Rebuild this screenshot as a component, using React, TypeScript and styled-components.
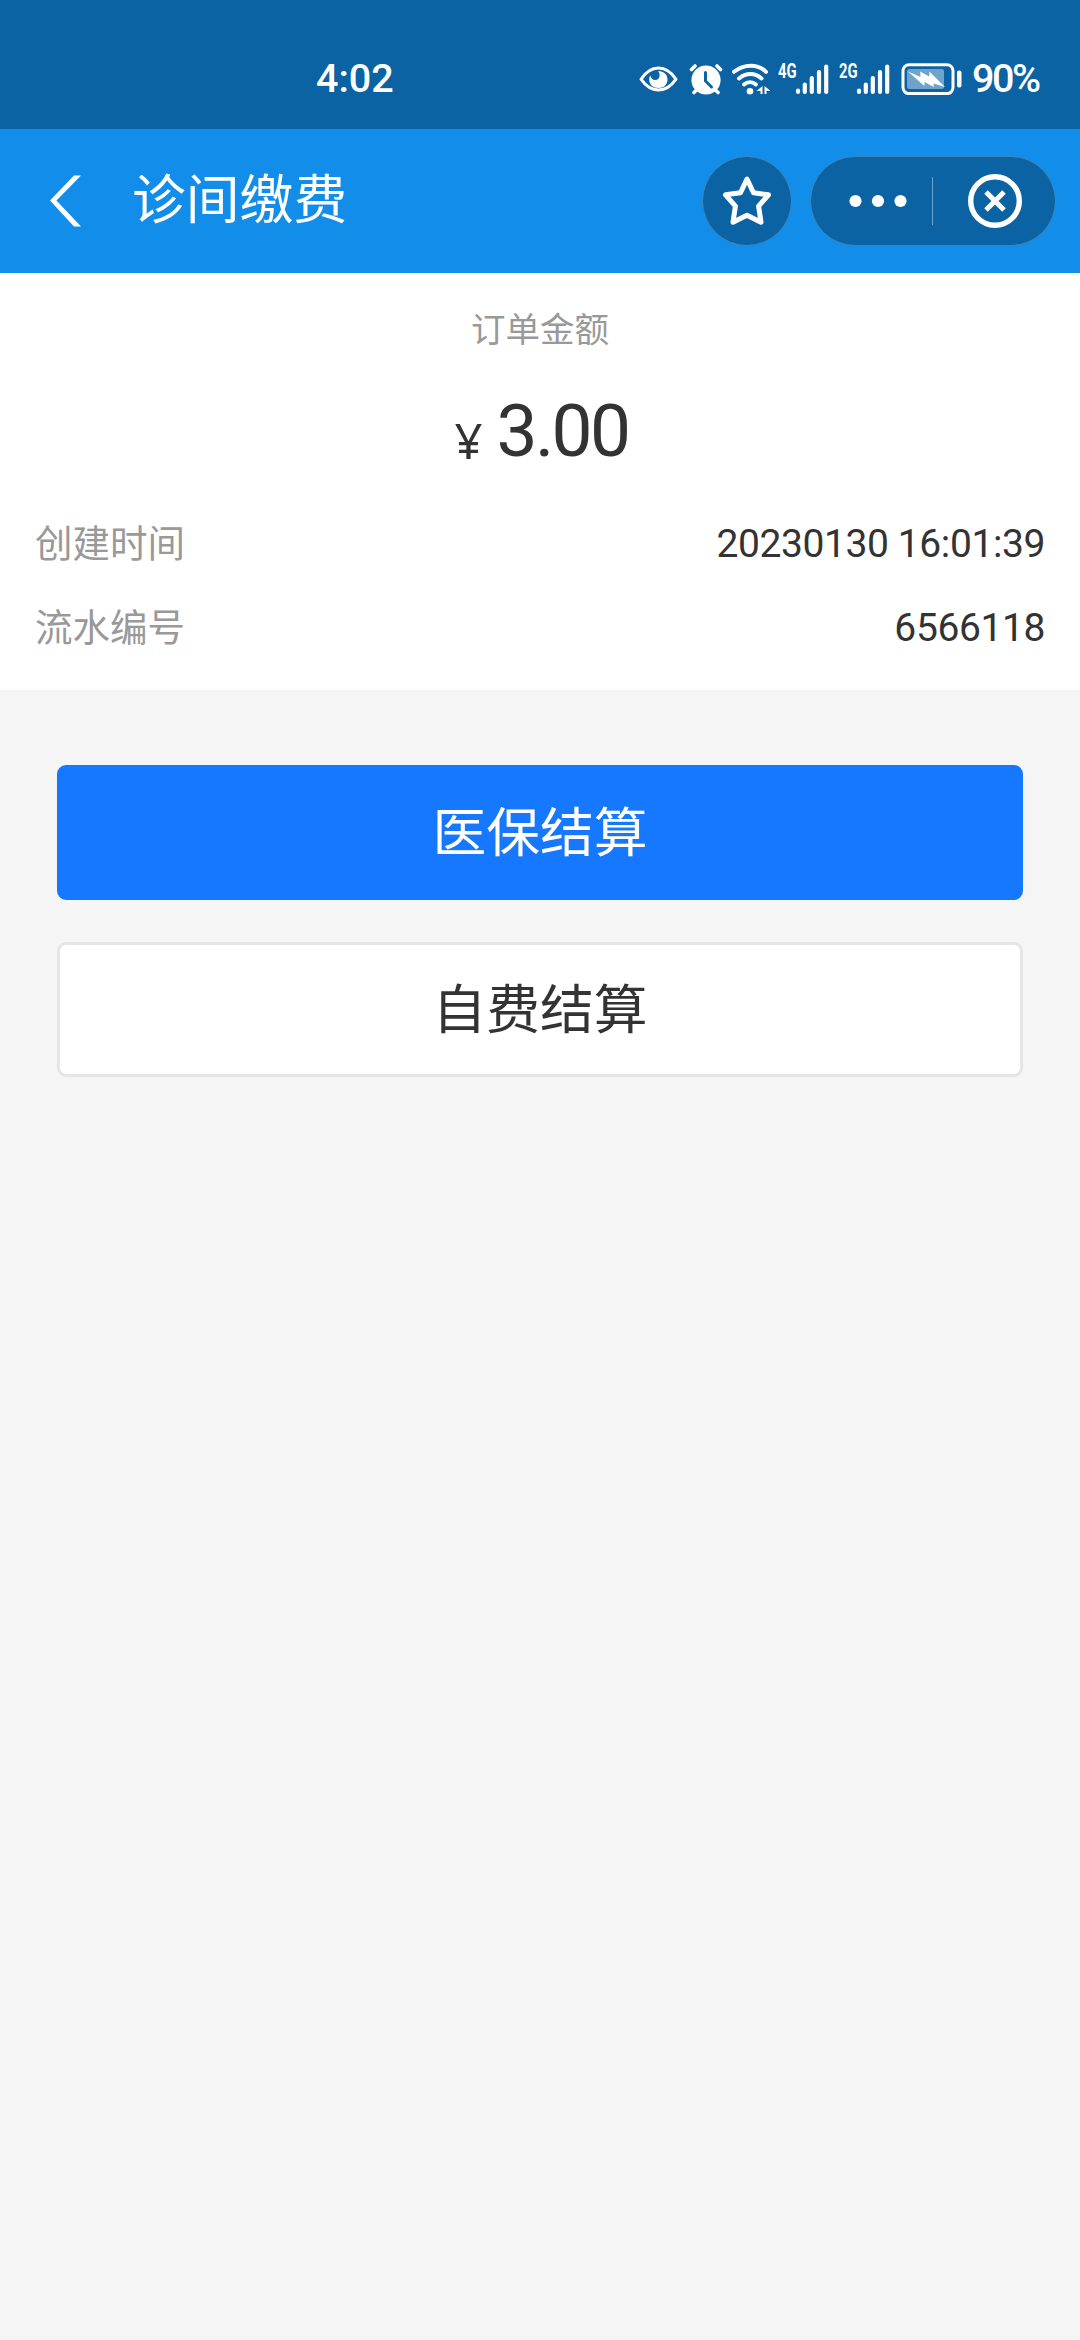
import React from "react";
import styled, { createGlobalStyle } from "styled-components";

const GlobalStyle = createGlobalStyle`
  * { box-sizing: border-box; }
  body {
    margin: 0;
    background: #f5f5f5;
    font-family: Roboto, "Noto Sans CJK SC", sans-serif;
  }
`;

const Page = styled.div`
  display: flex;
  flex-direction: column;
  width: 1080px;
  min-height: 2340px;
  background: #f5f5f5;
  overflow: hidden;
`;

const StatusBar = styled.div`
  display: flex;
  align-items: center;
  height: 129px;
  padding: 28px 39px 0 316px;
  background: #0b63a3;
  color: #fff;
`;

const StatusText = styled.span<{ $spacing: number }>`
  font-size: 39.5px;
  line-height: 48px;
  font-weight: 500;
  letter-spacing: ${(p) => p.$spacing}px;
  white-space: nowrap;
`;

const StatusIcons = styled.div`
  display: flex;
  align-items: center;
  margin-left: auto;
`;

const Glyph = styled.svg<{ $before?: number }>`
  display: block;
  flex: none;
  margin-left: ${(p) => p.$before ?? 0}px;
`;

const Network = styled.span<{ $before: number }>`
  width: 17px;
  height: 32px;
  margin-left: ${(p) => p.$before}px;
  font-size: 20px;
  line-height: 16px;
  font-weight: 700;
`;

const NetworkLabel = styled.span`
  display: block;
  width: 26px;
  transform: scaleX(0.74);
  transform-origin: left center;
`;

const Percent = styled.div`
  margin-left: 10px;
  width: 69px;
`;

const NavBar = styled.header`
  display: flex;
  align-items: center;
  height: 144px;
  padding: 0 24px 0 48px;
  background: #128eea;
`;

const Title = styled.h1`
  flex: 1;
  margin: 0 0 0 48px;
  color: #fff;
  font-size: 53.8px;
  line-height: 72px;
  font-weight: 400;
`;

const Capsule = styled.div<{ $width: number }>`
  display: flex;
  align-items: center;
  justify-content: center;
  width: ${(p) => p.$width}px;
  height: 90px;
  border: 1px solid #3c86bd;
  border-radius: 45px;
  background: #0b63a3;
`;

const Capsules = styled.div`
  display: flex;
  gap: 18px;
`;

const Divider = styled.div`
  width: 1px;
  height: 48px;
  background: #6da1c8;
`;

const CapsuleHalf = styled.div<{ $width: number; $shift: number }>`
  display: flex;
  justify-content: center;
  width: ${(p) => p.$width}px;
  padding-left: ${(p) => p.$shift}px;
`;

const Summary = styled.section`
  height: 417px;
  padding: 30px 35px 0;
  background: #fff;
`;

const SummaryLabel = styled.div`
  color: #999;
  font-size: 34.5px;
  line-height: 54px;
  text-align: center;
`;

const Amount = styled.div`
  display: flex;
  justify-content: center;
  align-items: baseline;
  gap: 14px;
  height: 116px;
  padding-left: 3px;
  margin-top: 29px;
  color: #333;
  line-height: 90px;
`;

const Currency = styled.span`
  font-family: "Noto Sans", sans-serif;
  font-size: 49px;
  transform: translateY(3px);
`;

const Figure = styled.span`
  font-size: 73px;
  letter-spacing: -2.6px;
`;

const Row = styled.div`
  display: flex;
  justify-content: space-between;
  align-items: baseline;
  height: 84px;
  line-height: 84px;
`;

const RowLabel = styled.span`
  color: #999;
  font-size: 37.5px;
`;

const RowValue = styled.span`
  color: #333;
  font-size: 39px;
  letter-spacing: -0.4px;
`;

const Actions = styled.main`
  display: flex;
  flex-direction: column;
  gap: 42px;
  padding: 75px 57px;
`;

const ActionButton = styled.button<{ $primary?: boolean }>`
  height: 135px;
  padding: 2px 0 0;
  border: 3px solid ${(p) => (p.$primary ? "#1677ff" : "#e5e5e5")};
  border-radius: 9px;
  background: ${(p) => (p.$primary ? "#1677ff" : "#fff")};
  color: ${(p) => (p.$primary ? "#fff" : "#333")};
  font-family: inherit;
  font-size: 53.8px;
  line-height: 72px;
`;

const EyeIcon = () => (
  <Glyph width="39" height="32" viewBox="0 0 39 32">
    <path d="M2 16.2C7 8.500 12.500 5 19.500 5s12.500 3.500 17.500 11.200C32 23.500 26.500 27 19.500 27S7 23.500 2 16.200Z" fill="none" stroke="#fff" strokeWidth="3" strokeLinejoin="round" />
    <path d="M19 8c6 0 9.500 3.600 9.500 8.500 0 5-3.800 8.500-9 8.500-5.300 0-9.300-3.500-9.300-8.500 0-1.500.4-3 1.200-4 .6 3 2.300 4.400 4.600 4.400 3 0 4.600-2 4.600-4.500 0-1.800-.5-3.200-1.600-4.400Z" fill="#fff" />
  </Glyph>
);

const AlarmIcon = () => (
  <Glyph width="34" height="32" viewBox="0 0 34 32" $before={11}>
    <g stroke="#fff" strokeWidth="3.600" strokeLinecap="round">
      <path d="M2.500 6.500 6 3M31.500 6.500 28 3M5 29.500l4-4M29 29.500l-4-4" />
    </g>
    <circle cx="17" cy="17" r="14.600" fill="#fff" />
    <path d="M16.500 9.500V18l6 6" fill="none" stroke="#0b63a3" strokeWidth="3" strokeLinecap="round" />
  </Glyph>
);

const WifiIcon = () => (
  <Glyph width="38" height="32" viewBox="0 0 38 32" $before={9}>
    <g fill="none" stroke="#fff" strokeWidth="4" strokeLinecap="round">
      <path d="M2 8.800C12 .6 26 .6 34 8.800" />
      <path d="M7 15.500C14 9.500 23 9.500 29.500 15.500" />
      <path d="M12 21.500C15.500 18.500 20.500 18.500 24 21.500" />
    </g>
    <circle cx="18" cy="28.300" r="3.300" fill="#fff" />
    <path d="M30.500 23v8h-2v-3H24.500ZM32.500 23l6 5h-4v3h-2Z" fill="#fff" />
  </Glyph>
);

const SignalIcon = () => (
  <Glyph width="34" height="32" viewBox="0 0 34 32">
    <g stroke="#fff" strokeWidth="4.200" strokeLinecap="round">
      <path d="M3 27.500v1.500M9.800 21.500V29M16.800 15v14M24 9v20M31.200 3.500V29" />
    </g>
  </Glyph>
);

const BatteryIcon = () => (
  <Glyph width="61" height="32" viewBox="0 0 61 32" $before={11}>
    <rect x="2" y="1.800" width="50" height="28.800" rx="6" fill="none" stroke="#fff" strokeWidth="3" />
    <rect x="6" y="6" width="37" height="20" rx="2.500" fill="#70a3cb" />
    <path d="m7 8.500 12.500 5.500-.3-5.500 9 5 .2-5L44 24l-11.500-3.500.3 3.500-9.300-5-.1 4Z" fill="#fff" />
    <rect x="56" y="7.500" width="4.500" height="17" rx="2" fill="#fff" />
  </Glyph>
);

const BackIcon = () => (
  <Glyph width="36" height="54" viewBox="0 0 36 54">
    <path d="M26 1.500h7L8.500 26.500 33 52.500h-7L2 26.500Z" fill="#fff" />
  </Glyph>
);

const StarIcon = () => (
  <Glyph width="54" height="56" viewBox="0 0 54 56">
    <path d="M27 6 33.500 19.800 48.500 21.800 38.600 33.200 41 49.200 27 42.300 13 49.200 15.400 33.200 5.500 21.800 20.500 19.800Z" fill="none" stroke="#fff" strokeWidth="5" strokeLinejoin="round" />
  </Glyph>
);

const MoreIcon = () => (
  <Glyph width="58" height="14" viewBox="0 0 58 14">
    <g fill="#fff">
      <circle cx="6.500" cy="7" r="6.100" />
      <circle cx="29" cy="7" r="6.100" />
      <circle cx="51.500" cy="7" r="6.100" />
    </g>
  </Glyph>
);

const CloseIcon = () => (
  <Glyph width="54" height="54" viewBox="0 0 54 54">
    <circle cx="27" cy="27" r="24.300" fill="none" stroke="#fff" strokeWidth="5.400" />
    <path d="m18 18 18 18M36 18l-18 18" stroke="#fff" strokeWidth="5" />
  </Glyph>
);

const details = [
  { label: "创建时间", value: "20230130 16:01:39" },
  { label: "流水编号", value: "6566118" },
];

export default function App() {
  return (
    <Page>
      <GlobalStyle />
      <StatusBar>
        <StatusText $spacing={0}>4:02</StatusText>
        <StatusIcons>
          <EyeIcon />
          <AlarmIcon />
          <WifiIcon />
          <Network $before={8}><NetworkLabel>4G</NetworkLabel></Network>
          <SignalIcon />
          <Network $before={10}><NetworkLabel>2G</NetworkLabel></Network>
          <SignalIcon />
          <BatteryIcon />
          <Percent><StatusText $spacing={-2.4}>90%</StatusText></Percent>
        </StatusIcons>
      </StatusBar>
      <NavBar>
        <BackIcon />
        <Title>诊间缴费</Title>
        <Capsules>
          <Capsule $width={90}><StarIcon /></Capsule>
          <Capsule $width={246}>
            <CapsuleHalf $width={121} $shift={12}><MoreIcon /></CapsuleHalf>
            <Divider />
            <CapsuleHalf $width={122} $shift={2}><CloseIcon /></CapsuleHalf>
          </Capsule>
        </Capsules>
      </NavBar>
      <Summary>
        <SummaryLabel>订单金额</SummaryLabel>
        <Amount>
          <Currency>¥</Currency>
          <Figure>3.00</Figure>
        </Amount>
        {details.map((d) => (
          <Row key={d.label}>
            <RowLabel>{d.label}</RowLabel>
            <RowValue>{d.value}</RowValue>
          </Row>
        ))}
      </Summary>
      <Actions>
        <ActionButton $primary>医保结算</ActionButton>
        <ActionButton>自费结算</ActionButton>
      </Actions>
    </Page>
  );
}
